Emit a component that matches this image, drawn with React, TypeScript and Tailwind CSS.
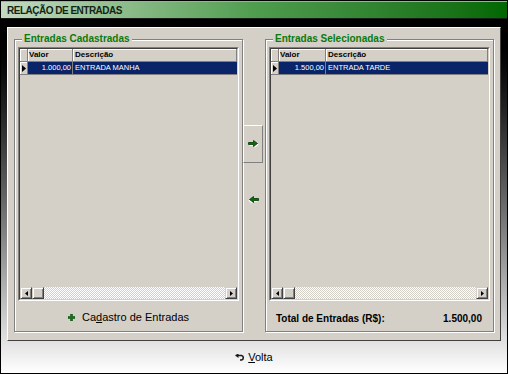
import React from "react";

function ScrollBtn({ dir }: { dir: "left" | "right" }) {
  return (
    <div className="w-[12px] h-[12px] shrink-0 bg-[#d4d0c8] border border-t-[#d4d0c8] border-l-[#d4d0c8] border-r-[#404040] border-b-[#404040] shadow-[inset_1px_1px_0_#fff,inset_-1px_-1px_0_#808080] flex items-center justify-center">
      <svg width="3" height="5" viewBox="0 0 3 5">
        <path d={dir === "left" ? "M3 0 L0 2.5 L3 5Z" : "M0 0 L3 2.5 L0 5Z"} fill="#000" />
      </svg>
    </div>
  );
}

function Grid({ valor, desc, valorW }: { valor: string; desc: string; valorW: string }) {
  const head =
    "h-[13px] bg-[#d4d0c8] border-r border-b border-[#808080] shadow-[inset_1px_1px_0_#fff] flex items-center";
  return (
    <div className="h-[254px] border border-t-[#808080] border-l-[#808080] border-r-white border-b-white flex flex-col">
      <div className="flex-1 flex flex-col border border-t-[#404040] border-l-[#404040] border-r-[#d4d0c8] border-b-[#d4d0c8] bg-[#d4d0c8]">
        <div className="flex">
          <div className={`${head} w-[8px] shrink-0`} />
          <div className={`${head} ${valorW} shrink-0 pl-[1px] text-[8px] font-bold text-black`}>Valor</div>
          <div className={`${head} flex-1 pl-[2px] text-[8px] font-bold text-black`}>Descrição</div>
        </div>
        <div className="flex">
          <div className={`${head} w-[8px] shrink-0 pl-[2px]`}>
            <svg width="4" height="7" viewBox="0 0 4 7">
              <path d="M0 0 L4 3.5 L0 7Z" fill="#000" />
            </svg>
          </div>
          <div className={`h-[13px] ${valorW} shrink-0 bg-[#0a246a] border-r border-b border-[#808080] text-white text-[7.5px] flex items-center justify-end pr-[1px]`}>
            {valor}
          </div>
          <div className="h-[13px] flex-1 bg-[#0a246a] border-b border-[#808080] text-white text-[7.5px] flex items-center pl-[2px]">
            {desc}
          </div>
        </div>
        <div className="flex-1" />
        <div className="flex h-[12px]">
          <ScrollBtn dir="left" />
          <div className="w-[12px] h-[12px] shrink-0 bg-[#d4d0c8] border border-t-[#d4d0c8] border-l-[#d4d0c8] border-r-[#404040] border-b-[#404040] shadow-[inset_1px_1px_0_#fff,inset_-1px_-1px_0_#808080]" />
          <div className="flex-1 bg-[repeating-conic-gradient(#ffffff_0_25%,#d4d0c8_0_50%)] bg-size-[2px_2px]" />
          <ScrollBtn dir="right" />
        </div>
      </div>
    </div>
  );
}

function Arrow({ dir }: { dir: "left" | "right" }) {
  return (
    <svg width="11" height="8" viewBox="0 0 11 8">
      <g transform={dir === "left" ? "translate(11 0) scale(-1 1)" : undefined}>
        <path d="M1 3 H6 V1 L10 4 L6 7 V5 H1 Z" fill="#fff" transform="translate(0.6 0.8)" />
        <path d="M0.5 2.5 H5.5 V0.5 L9.5 3.5 L5.5 6.5 V4.5 H0.5 Z" fill="#0b6a0b" stroke="#063806" strokeWidth="0.8" />
      </g>
    </svg>
  );
}

export default function App() {
  const fieldset =
    "w-[229px] h-[299px] shrink-0 border border-[#808080] shadow-[inset_1px_1px_0_#fff,1px_1px_0_#fff] px-[3px] flex flex-col";
  const legend = "ml-[4px] px-[2px] bg-[#d4d0c8] text-[10px] leading-[12px] font-bold text-[#0a7a0a]";
  return (
    <div className="w-[508px] h-[374px] flex flex-col border border-black overflow-hidden font-['Liberation_Sans',Arial,sans-serif]">
      <div className="h-[18px] shrink-0 flex items-center pl-[6px] bg-linear-to-r from-[#c4d9c2] via-[#4f9d4f] to-[#006800] border-t border-t-[#a8a8a8] border-b border-b-[#1a1a1a]">
        <span className="text-[10px] font-bold tracking-[-0.5px] text-[#142414]">RELAÇÃO DE ENTRADAS</span>
      </div>
      <div className="flex-1 flex flex-col bg-linear-to-b from-black to-white px-[6px] pt-[8px]">
        <div className="h-[314px] shrink-0 bg-[#d4d0c8] border border-t-white border-l-white border-r-[#404040] border-b-[#404040] flex pt-[5px] pl-[6px]">
          <fieldset className={fieldset}>
            <legend className={legend}>Entradas Cadastradas</legend>
            <div className="pt-[2px]">
              <Grid valor="1.000,00" desc="ENTRADA MANHA" valorW="w-[45px]" />
            </div>
            <div className="flex-1 flex items-center justify-center gap-[7px] pt-[3px]">
              <svg width="7" height="7" viewBox="0 0 7 7">
                <path d="M2.5 0 H4.5 V2.5 H7 V4.5 H4.5 V7 H2.5 V4.5 H0 V2.5 H2.5 Z" fill="#0b7a0b" stroke="#064006" strokeWidth="0.5" />
              </svg>
              <span className="text-[11px] text-black">
                Ca<span className="underline underline-offset-1">d</span>astro de Entradas
              </span>
            </div>
          </fieldset>
          <div className="w-[22px] shrink-0 flex flex-col pt-[92px] gap-[18px]">
            <div className="w-[20px] h-[38px] border border-t-white border-l-white border-r-[#808080] border-b-[#808080] flex items-center justify-center">
              <Arrow dir="right" />
            </div>
            <div className="w-[20px] h-[38px] flex items-center justify-center">
              <Arrow dir="left" />
            </div>
          </div>
          <fieldset className={fieldset}>
            <legend className={legend}>Entradas Selecionadas</legend>
            <div className="pt-[2px]">
              <Grid valor="1.500,00" desc="ENTRADA TARDE" valorW="w-[47px]" />
            </div>
            <div className="flex-1 flex items-center justify-between pl-[7px] pr-[8px] pt-[4px] text-[10px] font-bold text-black">
              <span>Total de Entradas (R$):</span>
              <span>1.500,00</span>
            </div>
          </fieldset>
        </div>
        <div className="flex-1 flex items-center justify-center gap-[3px] pt-[1px]">
          <svg width="10" height="7" viewBox="0 0 10 7">
            <path d="M3 1.5 H6.5 A2.3 2.3 0 0 1 6.5 6 H5" fill="none" stroke="#1a1a1a" strokeWidth="1.6" />
            <path d="M0 1.5 L3.5 -1 V4 Z" fill="#1a1a1a" />
          </svg>
          <span className="text-[11px] text-black">
            <span className="underline underline-offset-1">V</span>olta
          </span>
        </div>
      </div>
    </div>
  );
}
